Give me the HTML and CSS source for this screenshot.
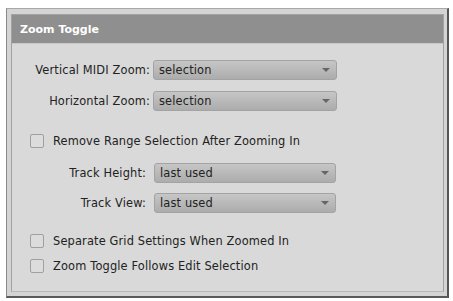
FILE: index.html
```html
<!DOCTYPE html>
<html>
<head>
<meta charset="utf-8">
<link rel="stylesheet" href="styles.css">
</head>
<body>
<div class="frame">
  <div class="panel">
    <div class="header">Zoom Toggle</div>
    <div class="content">
      <div class="grid g1">
        <span class="label">Vertical MIDI Zoom:</span>
        <div class="select"><span>selection</span><i class="arrow"></i></div>
        <span class="label">Horizontal Zoom:</span>
        <div class="select"><span>selection</span><i class="arrow"></i></div>
      </div>
      <label class="check c1"><span class="box"></span>Remove Range Selection After Zooming In</label>
      <div class="grid g2">
        <span class="label">Track Height:</span>
        <div class="select"><span>last used</span><i class="arrow"></i></div>
        <span class="label">Track View:</span>
        <div class="select"><span>last used</span><i class="arrow"></i></div>
      </div>
      <label class="check c2"><span class="box"></span>Separate Grid Settings When Zoomed In</label>
      <label class="check c3"><span class="box"></span>Zoom Toggle Follows Edit Selection</label>
    </div>
  </div>
</div>
</body>
</html>
```
FILE: styles.css
```css
html, body {
  margin: 0;
  padding: 0;
  background: #ffffff;
  font-family: "DejaVu Sans", sans-serif;
  font-size: 11.4px;
  letter-spacing: 0.15px;
  color: #222;
}
.frame {
  margin: 8px 0 0 6px;
  width: 433px;
  height: 278px;
  background: #d4d4d4;
  border-left: 1px solid #8a8a8a;
  border-top: 1px solid #a8a8a8;
  border-right: 2px solid #555;
  border-bottom: 2px solid #5a5a5a;
  padding: 5px 3px 4px 4px;
  box-sizing: content-box;
}
.panel {
  height: 100%;
  box-sizing: border-box;
  border: 1px solid #a2a2a2;
  border-bottom-color: #b8b8b8;
  background: #d9d9d9;
  display: flex;
  flex-direction: column;
}
.header {
  height: 28px;
  background: #8f8f8f;
  color: #fff;
  font-weight: bold;
  font-size: 11px;
  letter-spacing: 0;
  display: flex;
  align-items: center;
  padding-left: 8px;
  border-bottom: 1px solid #c8c8c8;
}
.content {
  padding-top: 16px;
  display: flex;
  flex-direction: column;
}
.grid {
  display: grid;
  grid-template-columns: 138px 184px;
  column-gap: 3px;
  row-gap: 11px;
  align-items: center;
}
.g2 {
  grid-template-columns: 134px 182px;
  column-gap: 8px;
  row-gap: 10px;
  margin-top: 15px;
}
.label {
  text-align: right;
  white-space: nowrap;
}
.select {
  height: 20px;
  box-sizing: border-box;
  border: 1px solid #a3a3a3;
  border-radius: 3px;
  background: linear-gradient(#c6c6c6, #acacac);
  display: flex;
  align-items: center;
  padding-left: 5px;
  position: relative;
}
.arrow {
  position: absolute;
  right: 6px;
  top: 7px;
  width: 0;
  height: 0;
  border-left: 4px solid transparent;
  border-right: 4px solid transparent;
  border-top: 4px solid #666;
}
.check {
  display: flex;
  align-items: center;
  gap: 9px;
  padding-left: 18px;
  height: 15px;
  white-space: nowrap;
}
.box {
  width: 14px;
  height: 14px;
  flex: none;
  box-sizing: border-box;
  border: 1px solid #a0a0a0;
  border-radius: 2px;
  background: #dcdcdc;
}
.c1 { margin-top: 22px; }
.c2 { margin-top: 20px; }
.c3 { margin-top: 10px; }
```
